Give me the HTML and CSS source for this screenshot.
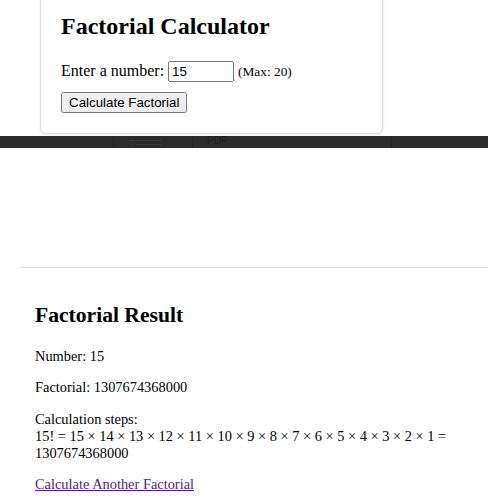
FILE: index.html
```html
<!DOCTYPE html>
<html lang="en">
<head>
<meta charset="utf-8">
<title>Factorial Calculator</title>
<link rel="stylesheet" href="styles.css">
</head>
<body>
<div class="top">
  <div class="card">
    <h2 class="card-title">Factorial Calculator</h2>
    <form class="calc-form">
      <div class="form-row">
        <label for="num">Enter a number:</label>
        <input id="num" class="num-input" type="number" value="15">
        <small class="hint">(Max: 20)</small>
      </div>
      <div class="form-row">
        <button type="button" class="calc-btn">Calculate Factorial</button>
      </div>
    </form>
  </div>
</div>
<div class="bar">
  <div class="bar-seg seg1"></div>
  <div class="bar-seg seg2"><span class="bar-lines"></span></div>
  <div class="bar-seg seg3"><span class="bar-pdf">PDF</span></div>
</div>
<div class="result">
  <h2 class="result-title">Factorial Result</h2>
  <p class="line">Number: 15</p>
  <p class="line">Factorial: 1307674368000</p>
  <p class="line">Calculation steps:<br>15! = 15 × 14 × 13 × 12 × 11 × 10 × 9 × 8 × 7 × 6 × 5 × 4 × 3 × 2 × 1 = 1307674368000</p>
  <p class="line"><a class="back-link" href="#">Calculate Another Factorial</a></p>
</div>
</body>
</html>
```
FILE: styles.css
```css
html, body {
  margin: 0;
  padding: 0;
  background: #ffffff;
  font-family: "Liberation Serif", "Times New Roman", serif;
  color: #000;
  overflow: hidden;
}

.top {
  display: flex;
  align-items: flex-start;
  height: 136px;
  padding-left: 40px;
}

.card {
  width: 343px;
  box-sizing: border-box;
  margin-top: -20px;
  padding: 32px 20px 20px;
  border: 1px solid #dcdcdc;
  border-radius: 6px;
  box-shadow: 0 1px 3px rgba(0, 0, 0, 0.08);
  background: #fff;
}

.card-title {
  margin: 0 0 21px;
  font-size: 24px;
  font-weight: bold;
}

.calc-form {
  margin: 0;
  font-size: 16px;
}

.form-row {
  margin-bottom: 10px;
}

.form-row:last-child {
  margin-bottom: 0;
}

.num-input {
  width: 66px;
  box-sizing: border-box;
  font-family: "Liberation Sans", Arial, sans-serif;
  font-size: 13.33px;
}

.hint {
  font-size: 13.33px;
}

.calc-btn {
  font-family: "Liberation Sans", Arial, sans-serif;
  font-size: 13.33px;
}

.bar {
  height: 12px;
  background: #2b2b2b;
  display: flex;
  overflow: hidden;
}

.bar-seg {
  height: 100%;
  box-sizing: border-box;
}

.seg1 {
  width: 113px;
}

.seg2 {
  width: 80px;
  border-left: 1px solid #242424;
  border-right: 1px solid #242424;
  padding: 4px 0 0 16px;
}

.bar-lines {
  display: block;
  width: 32px;
  height: 3px;
  border-top: 1px solid #3a3a3a;
  border-bottom: 1px solid #363636;
}

.seg3 {
  width: 199px;
  border-right: 1px solid #242424;
  padding-left: 14px;
}

.bar-pdf {
  display: block;
  font-family: "Liberation Sans", Arial, sans-serif;
  font-size: 10px;
  line-height: 10px;
  color: #1c1c1c;
}

.result {
  margin: 119px 0 0 20px;
  border-top: 1px solid #dedede;
  padding: 0 20px 0 15px;
  font-size: 14.4px;
}

.result-title {
  margin: 35px 0 20px;
  font-size: 21.6px;
  font-weight: bold;
}

.line {
  margin: 0 0 14.4px;
  line-height: 17px;
}

.back-link {
  color: #551a8b;
}
```
